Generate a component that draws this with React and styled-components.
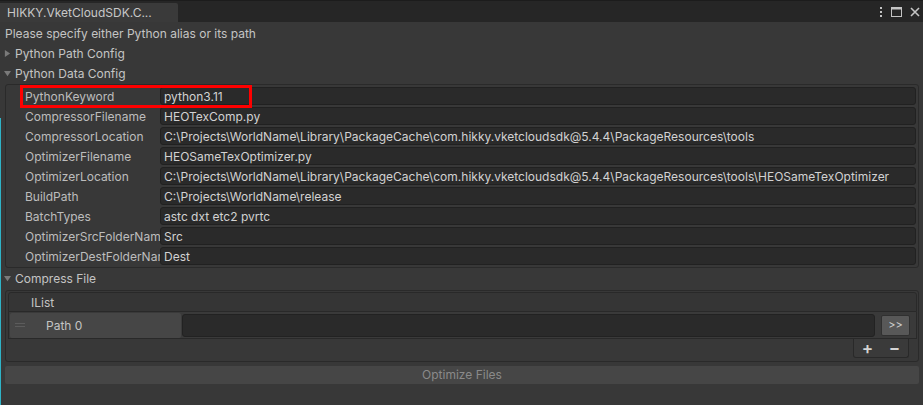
import React from 'react';
import styled, { createGlobalStyle } from 'styled-components';

const GlobalStyle = createGlobalStyle`
  html, body {
    margin: 0;
    padding: 0;
    background: #383838;
  }
  body {
    font-family: Inter, "Noto Sans", "Liberation Sans", sans-serif;
    font-size: 12px;
    color: #c4c4c4;
  }
`;

const rows = [
  { label: 'PythonKeyword', value: 'python3.11' },
  { label: 'CompressorFilename', value: 'HEOTexComp.py' },
  {
    label: 'CompressorLocation',
    value: 'C:\\Projects\\WorldName\\Library\\PackageCache\\com.hikky.vketcloudsdk@5.4.4\\PackageResources\\tools',
  },
  { label: 'OptimizerFilename', value: 'HEOSameTexOptimizer.py' },
  {
    label: 'OptimizerLocation',
    value:
      'C:\\Projects\\WorldName\\Library\\PackageCache\\com.hikky.vketcloudsdk@5.4.4\\PackageResources\\tools\\HEOSameTexOptimizer',
  },
  { label: 'BuildPath', value: 'C:\\Projects\\WorldName\\release' },
  { label: 'BatchTypes', value: 'astc dxt etc2 pvrtc' },
  { label: 'OptimizerSrcFolderName', value: 'Src' },
  { label: 'OptimizerDestFolderName', value: 'Dest' },
];

function KebabIcon() {
  return (
    <svg width="4" height="12" viewBox="0 0 4 12">
      <rect x="1" y="1" width="2" height="2" fill="#c4c4c4" />
      <rect x="1" y="5" width="2" height="2" fill="#c4c4c4" />
      <rect x="1" y="9" width="2" height="2" fill="#c4c4c4" />
    </svg>
  );
}

function MaximizeIcon() {
  return (
    <svg width="11" height="10" viewBox="0 0 11 10">
      <rect x="0.5" y="0.5" width="10" height="9" fill="none" stroke="#c4c4c4" />
      <rect x="0" y="0" width="11" height="2.5" fill="#c4c4c4" />
    </svg>
  );
}

function CloseIcon() {
  return (
    <svg width="10" height="10" viewBox="0 0 10 10">
      <path d="M1 1 L9 9 M9 1 L1 9" stroke="#c4c4c4" strokeWidth="1.6" />
    </svg>
  );
}

function Foldout({ open, children }) {
  return (
    <FoldoutRow>
      <Arrow viewBox="0 0 8 8" open={open}>
        {open ? <path d="M0 1 L8 1 L4 7 Z" /> : <path d="M1 0 L7 4 L1 8 Z" />}
      </Arrow>
      {children}
    </FoldoutRow>
  );
}

export default function App() {
  return (
    <Window>
      <GlobalStyle />
      <TabBar>
        <Tab>HIKKY.VketCloudSDK.C...</Tab>
        <TabActions>
          <KebabIcon />
          <MaximizeIcon />
          <CloseIcon />
        </TabActions>
      </TabBar>

      <Content>
        <HelpLine>Please specify either Python alias or its path</HelpLine>
        <Foldout>Python Path Config</Foldout>
        <Foldout open>Python Data Config</Foldout>

        <GroupBox>
          {rows.map((row) => (
            <PropertyRow key={row.label}>
              <Label>{row.label}</Label>
              <Field>{row.value}</Field>
            </PropertyRow>
          ))}
          <Highlight />
        </GroupBox>

        <Foldout open>Compress File</Foldout>

        <ListBox>
          <ListHeader>IList</ListHeader>
          <ListBody>
            <ElementLabel>
              <Handle />
              Path 0
            </ElementLabel>
            <ElementField />
            <ArrowButton>&gt;&gt;</ArrowButton>
          </ListBody>
          <ListFooter>
            <FooterButton>+</FooterButton>
            <FooterButton>−</FooterButton>
          </ListFooter>
        </ListBox>

        <ActionButton>Optimize Files</ActionButton>
      </Content>
      <EdgeLine />
    </Window>
  );
}

const Window = styled.div`
  position: relative;
  width: 923px;
  height: 405px;
  overflow: hidden;
  background: #383838;
`;

const TabBar = styled.div`
  display: flex;
  align-items: flex-end;
  justify-content: space-between;
  height: 22px;
  background: #262626;
  border-top: 1px solid #1c1c1c;
  box-sizing: border-box;
`;

const Tab = styled.div`
  width: 178px;
  height: 19px;
  padding-left: 7px;
  box-sizing: border-box;
  background: #3a3a3a;
  border-top-right-radius: 2px;
  line-height: 19px;
  font-size: 12px;
  color: #c8c8c8;
`;

const TabActions = styled.div`
  display: flex;
  align-items: center;
  gap: 8px;
  height: 21px;
  padding-right: 3px;
  align-self: center;
`;

const Content = styled.div`
  padding: 2px 4px 0 4px;
`;

const HelpLine = styled.div`
  height: 19px;
  line-height: 19px;
  padding-left: 1px;
`;

const FoldoutRow = styled.div`
  display: flex;
  align-items: center;
  height: 20px;
  gap: 4px;
`;

const Arrow = styled.svg`
  width: 7px;
  height: 7px;
  fill: #7a7a7a;
  margin-top: ${(p) => (p.open ? '1px' : '0')};
`;

const GroupBox = styled.div`
  position: relative;
  margin: 1px 0 0 1px;
  padding: 1px 2px 1px 19px;
  border: 1px solid #2a2a2a;
  border-radius: 3px;
  display: flex;
  flex-direction: column;
`;

const PropertyRow = styled.div`
  display: flex;
  align-items: center;
  height: 20px;
`;

const Label = styled.div`
  width: 135px;
  flex-shrink: 0;
  overflow: hidden;
  white-space: nowrap;
  color: #bdbdbd;
`;

const Field = styled.div`
  flex: 1;
  height: 18px;
  line-height: 18px;
  padding-left: 3px;
  box-sizing: border-box;
  background: #2a2a2a;
  border: 1px solid #212121;
  border-radius: 3px;
  white-space: nowrap;
  overflow: hidden;
  color: #d2d2d2;
`;

const Highlight = styled.div`
  position: absolute;
  left: 14px;
  top: 0px;
  width: 232px;
  height: 23px;
  box-sizing: border-box;
  border: 3px solid #ff0000;
`;

const ListBox = styled.div`
  margin: 2px 0 0 1px;
  padding: 1px 1px 3px 2px;
  border: 1px solid #2a2a2a;
  border-radius: 3px;
  display: flex;
  flex-direction: column;
  height: 72px;
  box-sizing: border-box;
`;

const ListHeader = styled.div`
  height: 20px;
  line-height: 19px;
  padding-left: 22px;
  box-sizing: border-box;
  background: #353535;
  border: 1px solid #292929;
  border-radius: 3px 3px 0 0;
`;

const ListBody = styled.div`
  display: flex;
  align-items: center;
  height: 28px;
  box-sizing: border-box;
  background: #3a3a3a;
  border: 1px solid #292929;
  border-top: none;
  padding: 0 6px 0 1px;
`;

const ElementLabel = styled.div`
  display: flex;
  align-items: center;
  width: 171px;
  height: 25px;
  padding-left: 5px;
  box-sizing: border-box;
  gap: 21px;
  background: #464646;
  border-radius: 2px;
  color: #c4c4c4;
`;

const Handle = styled.span`
  width: 10px;
  height: 4px;
  border-top: 1px solid #5c5c5c;
  border-bottom: 1px solid #5c5c5c;
  box-sizing: border-box;
`;

const ElementField = styled.div`
  flex: 1;
  height: 21px;
  margin-left: 1px;
  background: #2a2a2a;
  border: 1px solid #222222;
  border-radius: 3px;
`;

const ArrowButton = styled.div`
  width: 27px;
  height: 19px;
  margin-left: 6px;
  line-height: 19px;
  text-align: center;
  background: #585858;
  border: 1px solid #303030;
  border-radius: 2px;
  font-size: 11px;
  color: #d0d0d0;
`;

const ListFooter = styled.div`
  align-self: flex-end;
  display: flex;
  justify-content: space-around;
  align-items: center;
  width: 56px;
  height: 19px;
  margin-right: 8px;
  box-sizing: border-box;
  background: #3a3a3a;
  border: 1px solid #292929;
  border-top: none;
  border-radius: 0 0 3px 3px;
`;

const FooterButton = styled.span`
  font-size: 17px;
  line-height: 17px;
  font-weight: 600;
  color: #d4d4d4;
`;

const ActionButton = styled.div`
  margin: 4px 0 0 1px;
  height: 18px;
  line-height: 18px;
  text-align: center;
  background: #464646;
  border-radius: 2px;
  color: #8a8a8a;
`;

const EdgeLine = styled.div`
  position: absolute;
  left: 0;
  top: 118px;
  bottom: 0;
  width: 1px;
  background: #2fb3c7;
`;
